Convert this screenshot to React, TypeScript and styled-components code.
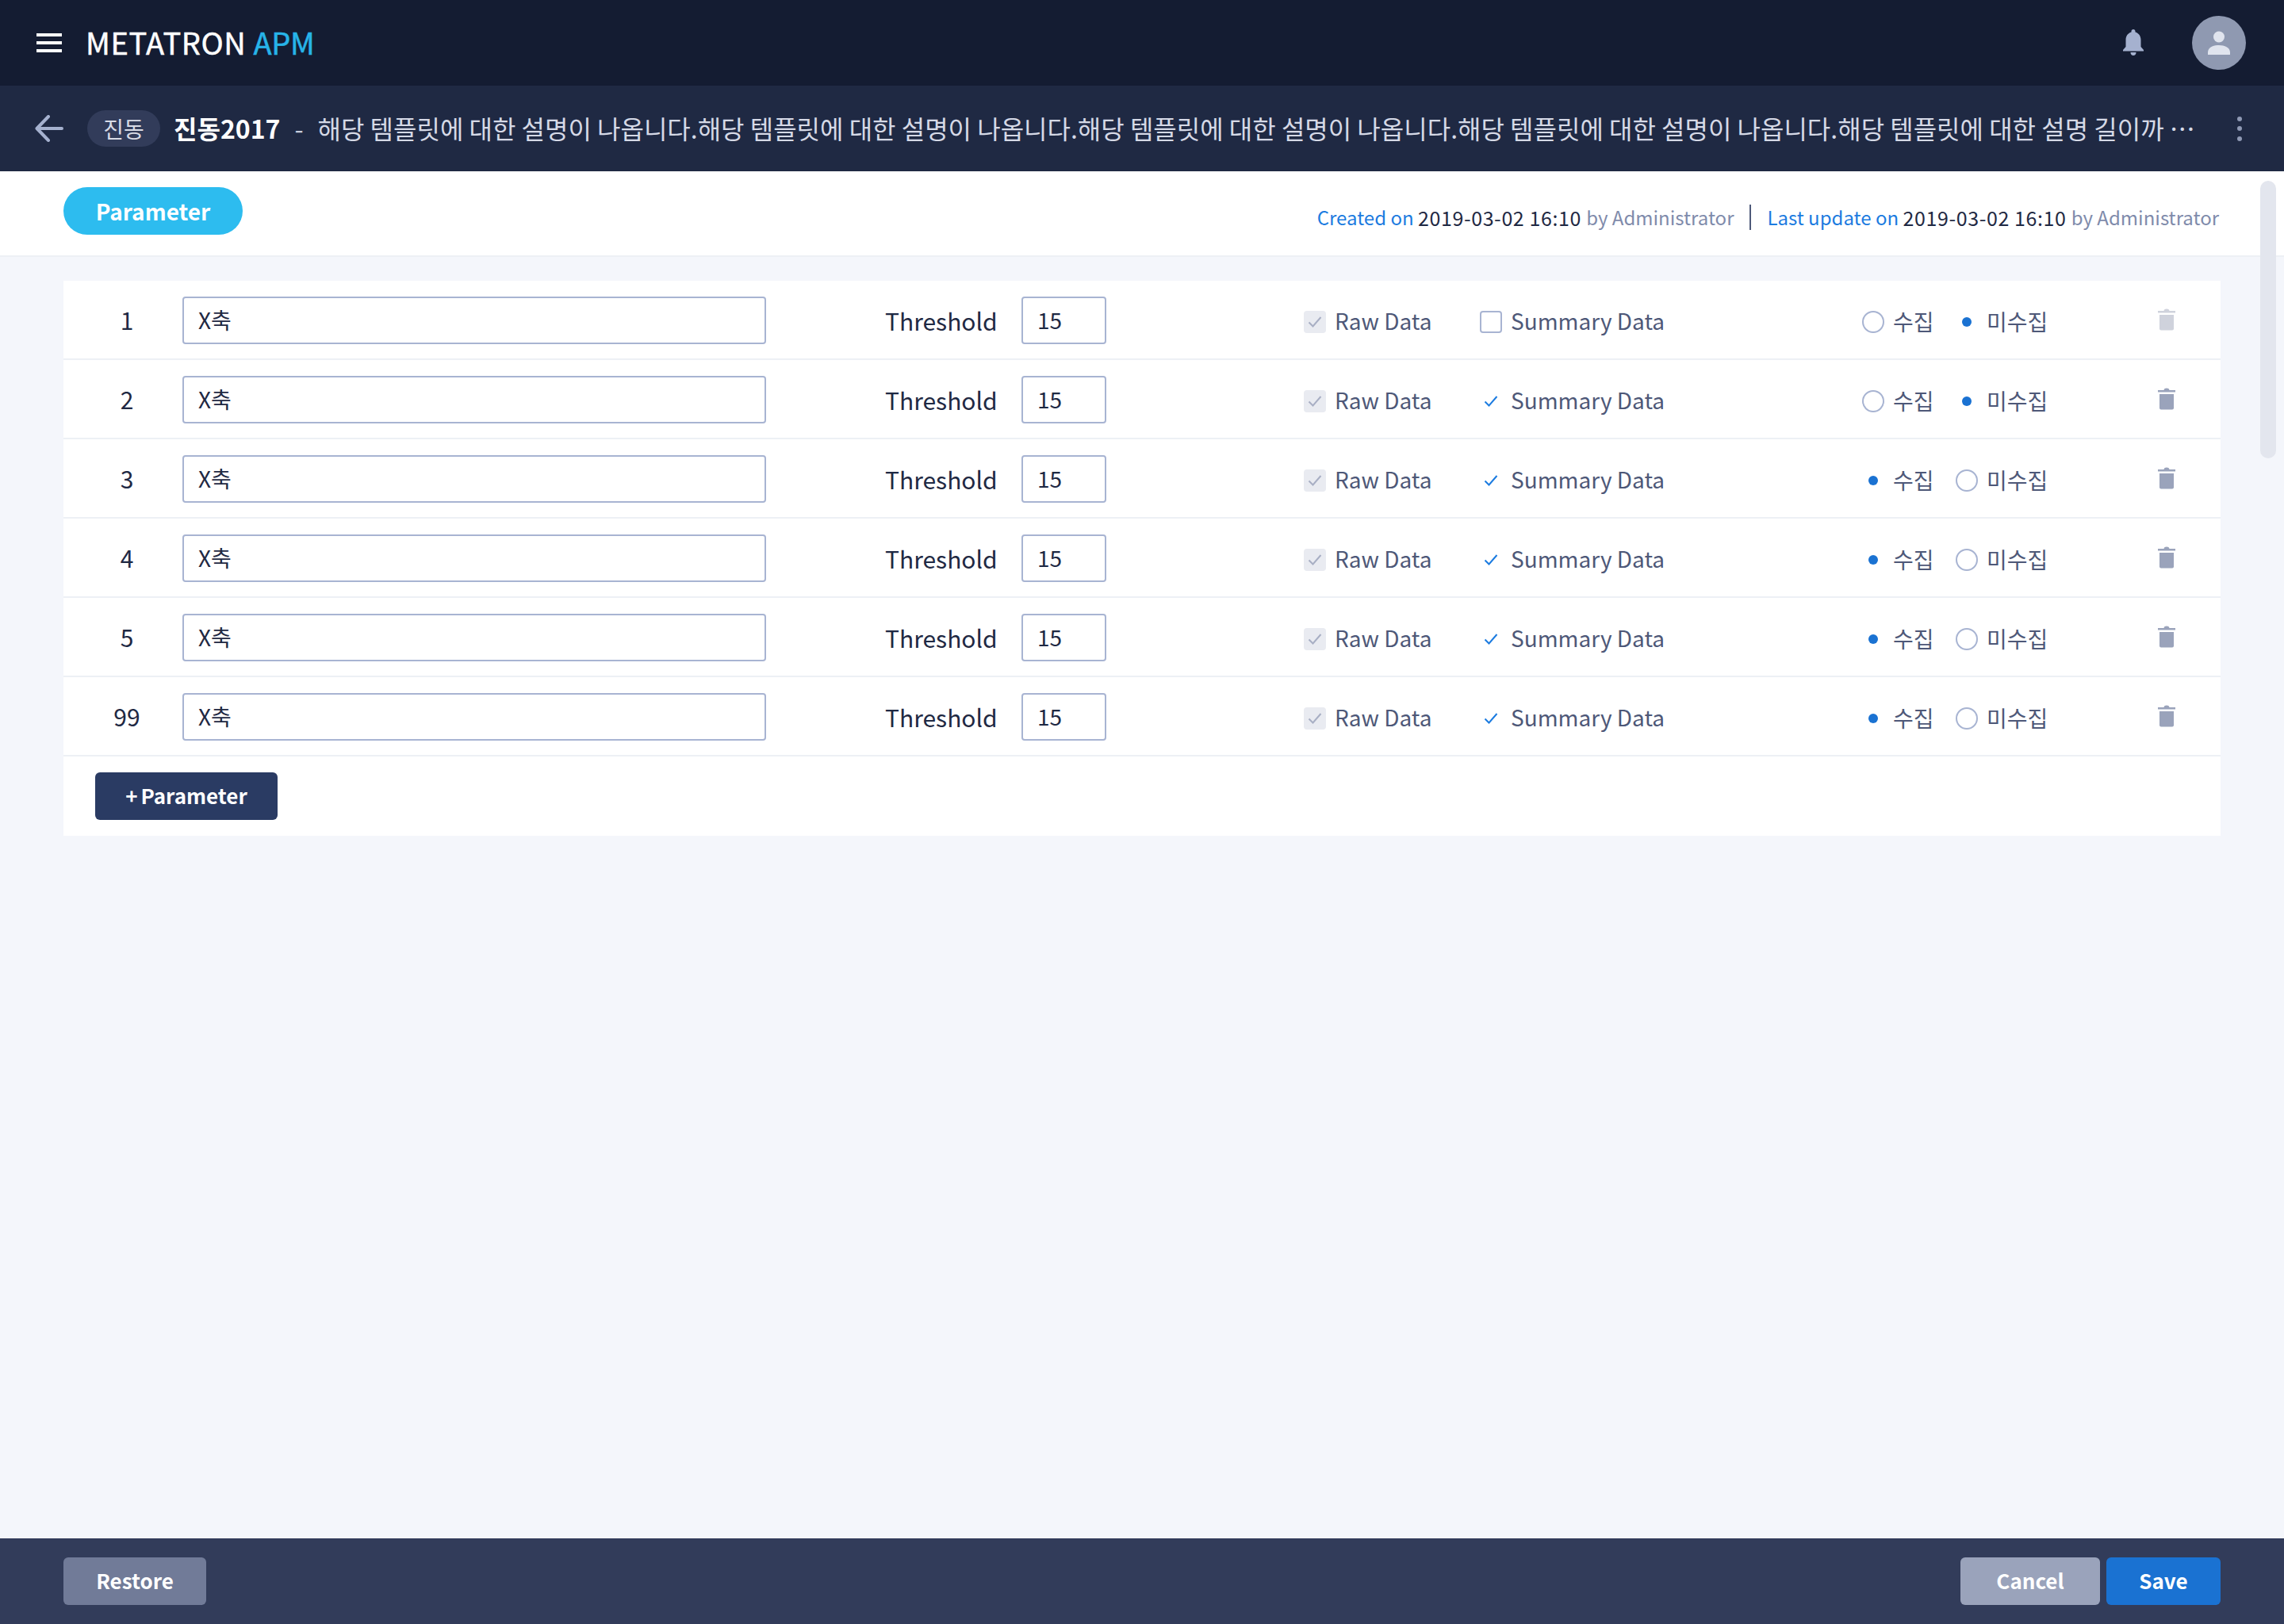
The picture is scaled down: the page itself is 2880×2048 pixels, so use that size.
import React from 'react';
import styled, { createGlobalStyle } from 'styled-components';

const GlobalStyle = createGlobalStyle`
  html, body {
    margin: 0;
    padding: 0;
    background: #f4f6fb;
    font-family: "Noto Sans CJK KR", "Noto Sans", sans-serif;
  }
  * { box-sizing: border-box; }
`;

const Page = styled.div`
  position: relative;
  width: 2880px;
  height: 2048px;
  display: flex;
  flex-direction: column;
  background: #f4f6fb;
  overflow: hidden;
`;

const TopBar = styled.header`
  height: 108px;
  flex: none;
  display: flex;
  align-items: center;
  padding: 0 48px 0 46px;
  background: #141c32;
`;

const MenuButton = styled.div`
  width: 32px;
  height: 24px;
  display: flex;
  flex-direction: column;
  justify-content: space-between;
  margin-right: 30px;
  span {
    display: block;
    height: 4px;
    background: #fff;
  }
`;

const Logo = styled.div`
  font-size: 38px;
  letter-spacing: 0.6px;
  color: #fff;
  line-height: 1;
  padding-bottom: 2px;
  -webkit-text-stroke: 0.5px currentColor;
  span {
    color: #27b4e8;
    letter-spacing: -0.4px;
  }
`;

const TopRight = styled.div`
  margin-left: auto;
  display: flex;
  align-items: center;
  gap: 60px;
`;

const Avatar = styled.div`
  width: 68px;
  height: 68px;
  border-radius: 50%;
  background: #8f99b1;
  display: flex;
  align-items: center;
  justify-content: center;
`;

const SubBar = styled.div`
  height: 108px;
  flex: none;
  display: flex;
  align-items: center;
  padding: 0 0 0 44px;
  background: #1f2943;
`;

const BackIcon = styled.svg`
  flex: none;
  margin-right: 30px;
`;

const TypeBadge = styled.div`
  flex: none;
  width: 92px;
  height: 46px;
  border-radius: 23px;
  background: #323c5a;
  color: #d8dbe6;
  font-size: 28px;
  display: flex;
  align-items: center;
  justify-content: center;
  margin-right: 17px;
`;

const Title = styled.div`
  flex: none;
  font-size: 32px;
  font-weight: 700;
  color: #fff;
  padding-bottom: 2px;
`;

const Dash = styled.div`
  flex: none;
  margin: 0 18px;
  font-size: 32px;
  color: #c9cede;
  padding-bottom: 2px;
`;

const Description = styled.div`
  width: 2374px;
  flex: none;
  font-size: 32px;
  color: #d5d9e6;
  white-space: nowrap;
  overflow: hidden;
  text-overflow: ellipsis;
  padding-bottom: 2px;
`;

const Kebab = styled.div`
  margin-left: 46px;
  display: flex;
  flex-direction: column;
  gap: 6.5px;
  span {
    width: 6px;
    height: 6px;
    border-radius: 50%;
    background: #8f99b4;
  }
`;

const InfoBar = styled.div`
  height: 108px;
  flex: none;
  display: flex;
  align-items: flex-start;
  justify-content: space-between;
  padding: 20px 82px 0 80px;
  background: #fff;
  border-bottom: 2px solid #edf0f5;
`;

const TabPill = styled.div`
  width: 226px;
  height: 60px;
  border-radius: 30px;
  background: #2dbcef;
  color: #fff;
  font-size: 28px;
  font-weight: 700;
  display: flex;
  align-items: center;
  justify-content: center;
`;

const Meta = styled.div`
  margin-top: 20px;
  display: flex;
  align-items: center;
  font-size: 24px;
  line-height: 36px;
  white-space: pre;
`;

const MetaAccent = styled.span`
  color: #1b7be0;
`;

const MetaDate = styled.span`
  color: #1f2943;
  font-size: 25px;
  letter-spacing: 0.6px;
`;

const MetaMuted = styled.span`
  color: #7f8bab;
`;

const MetaDivider = styled.span`
  width: 2px;
  height: 32px;
  margin: 0 20px;
  background: #4e5a7a;
`;

const Content = styled.main`
  flex: 1;
  padding: 30px 80px 0;
`;

const Card = styled.section`
  background: #fff;
  height: 700px;
`;

const Row = styled.div`
  height: 100px;
  display: grid;
  grid-template-columns: 110px 886px 172px 356px 222px 482px 118px 255px 40px;
  align-items: center;
  padding: 2px 0 0 40px;
  border-bottom: 2px solid #edf0f5;
`;

const RowNumber = styled.div`
  width: 80px;
  text-align: center;
  font-size: 30px;
  color: #1f2943;
  padding-bottom: 2px;
`;

const TextField = styled.input<{ $narrow?: boolean }>`
  height: 60px;
  border: 2px solid #a8b4d2;
  border-radius: 4px;
  background: #fff;
  padding: 0 18px 2px;
  font-family: inherit;
  font-size: 28px;
  color: #1f2943;
  outline: none;
  width: ${(p) => (p.$narrow ? '107px' : '736px')};
`;

const ThresholdLabel = styled.div`
  font-size: 30px;
  color: #1f2943;
  padding-bottom: 1px;
`;

const CheckLabel = styled.label`
  display: flex;
  align-items: center;
  gap: 11px;
  font-size: 28px;
  color: #4e5878;
`;

const CheckBox = styled.span<{ $state: 'disabled' | 'empty' | 'checked' }>`
  width: 28px;
  height: 28px;
  flex: none;
  margin-top: 4px;
  border-radius: 4px;
  display: flex;
  align-items: center;
  justify-content: center;
  background: ${(p) => (p.$state === 'disabled' ? '#e9ebf1' : '#fff')};
  border: ${(p) => (p.$state === 'empty' ? '2px solid #a8b4d2' : 'none')};
`;

const RadioLabel = styled.label`
  display: flex;
  align-items: center;
  gap: 11px;
  font-size: 28px;
  color: #4e5878;
  padding-top: 2px;
`;

const RadioMark = styled.span<{ $on: boolean }>`
  width: 28px;
  height: 28px;
  flex: none;
  margin-top: 2px;
  border-radius: 50%;
  border: ${(p) => (p.$on ? 'none' : '2px solid #a8b4d2')};
  display: flex;
  align-items: center;
  justify-content: center;
  &::after {
    content: '';
    display: ${(p) => (p.$on ? 'block' : 'none')};
    width: 12px;
    height: 12px;
    border-radius: 50%;
    background: #1a72d2;
  }
`;

const TrashIcon = styled.svg`
  display: block;
  margin-bottom: 2px;
`;

const AddRow = styled.div`
  padding: 20px 40px;
`;

const DarkButton = styled.button`
  width: 230px;
  height: 60px;
  border: none;
  border-radius: 6px;
  background: #2a3b63;
  color: #fff;
  font-family: inherit;
  font-size: 26px;
  font-weight: 700;
  word-spacing: -2px;
  padding: 0 0 4px;
`;

const BottomBar = styled.footer`
  height: 108px;
  flex: none;
  display: flex;
  align-items: center;
  justify-content: space-between;
  padding: 0 80px;
  background: #323c5a;
`;

const ButtonGroup = styled.div`
  display: flex;
  gap: 8px;
`;

const FootButton = styled.button<{ $w: number; $bg: string }>`
  width: ${(p) => p.$w}px;
  height: 60px;
  border: none;
  border-radius: 6px;
  background: ${(p) => p.$bg};
  color: #fff;
  font-family: inherit;
  font-size: 26px;
  font-weight: 700;
  padding: 0 0 4px;
`;

const Scrollbar = styled.div`
  position: absolute;
  left: 2850px;
  top: 228px;
  width: 20px;
  height: 350px;
  border-radius: 10px;
  background: #e3e6ee;
`;

const Tick = ({ color }: { color: string }) => (
  <svg width="18" height="16" viewBox="0 0 18 16" fill="none">
    <path d="M1.5 8.5 L6.5 13.5 L16.5 2" stroke={color} strokeWidth="2" />
  </svg>
);

const Trash = ({ color }: { color: string }) => (
  <TrashIcon width="22" height="28" viewBox="0 0 22 28">
    <path d="M0 3h7.5C8 1.200 9 .5 11 .5s3 .7 3.500 2.500H22v2.500H0z" fill={color} />
    <path d="M2 8h18v17.500a2 2 0 0 1-2 2H4a2 2 0 0 1-2-2z" fill={color} />
  </TrashIcon>
);

const rows = [
  { no: 1, summary: false, collect: false, locked: true },
  { no: 2, summary: true, collect: false, locked: false },
  { no: 3, summary: true, collect: true, locked: false },
  { no: 4, summary: true, collect: true, locked: false },
  { no: 5, summary: true, collect: true, locked: false },
  { no: 99, summary: true, collect: true, locked: false },
];

const sentence = '해당 템플릿에 대한 설명이 나옵니다.';
const description = sentence.repeat(4) + '해당 템플릿에 대한 설명 길이까 지나치게 길어지면 말줄임으로 표시됩니다.';

export default function App() {
  return (
    <Page>
      <GlobalStyle />
      <TopBar>
        <MenuButton>
          <span />
          <span />
          <span />
        </MenuButton>
        <Logo>
          METATRON <span>APM</span>
        </Logo>
        <TopRight>
          <svg width="28" height="34" viewBox="0 0 28 34">
            <path
              d="M14 0c1.500 0 2.500 1 2.500 2.600v1C21 5 23.500 8.500 23.500 13.500V22l3.500 4v1.500H1V26l3.500-4v-8.500C4.500 8.500 7 5 11.500 3.600v-1C11.500 1 12.500 0 14 0z"
              fill="#a5b1cf"
            />
            <path d="M10.500 29h7c0 2.500-1.500 4-3.500 4s-3.500-1.500-3.500-4z" fill="#a5b1cf" />
          </svg>
          <Avatar>
            <svg width="28" height="30" viewBox="0 0 28 30">
              <circle cx="14" cy="7.500" r="7" fill="#e0e4ee" />
              <path d="M0 30v-3c0-6 7-9 14-9s14 3 14 9v3z" fill="#e0e4ee" />
            </svg>
          </Avatar>
        </TopRight>
      </TopBar>

      <SubBar>
        <BackIcon width="36" height="34" viewBox="0 0 36 34" fill="none">
          <path
            d="M34 17H3M17 2 2.500 17 17 32"
            stroke="#a5b1cf"
            strokeWidth="4"
            strokeLinecap="round"
            strokeLinejoin="round"
          />
        </BackIcon>
        <TypeBadge>진동</TypeBadge>
        <Title>진동2017</Title>
        <Dash>-</Dash>
        <Description>{description}</Description>
        <Kebab>
          <span />
          <span />
          <span />
        </Kebab>
      </SubBar>

      <InfoBar>
        <TabPill>Parameter</TabPill>
        <Meta>
          <MetaAccent>Created on </MetaAccent>
          <MetaDate>2019-03-02 16:10 </MetaDate>
          <MetaMuted>by Administrator</MetaMuted>
          <MetaDivider />
          <MetaAccent>Last update on </MetaAccent>
          <MetaDate>2019-03-02 16:10 </MetaDate>
          <MetaMuted>by Administrator</MetaMuted>
        </Meta>
      </InfoBar>

      <Content>
        <Card>
          {rows.map((r) => (
            <Row key={r.no}>
              <RowNumber>{r.no}</RowNumber>
              <TextField defaultValue="X축" readOnly />
              <ThresholdLabel>Threshold</ThresholdLabel>
              <TextField defaultValue="15" $narrow readOnly />
              <CheckLabel>
                <CheckBox $state="disabled">
                  <Tick color="#a8afc4" />
                </CheckBox>
                Raw Data
              </CheckLabel>
              <CheckLabel>
                <CheckBox $state={r.summary ? 'checked' : 'empty'}>
                  {r.summary && <Tick color="#1b7be0" />}
                </CheckBox>
                Summary Data
              </CheckLabel>
              <RadioLabel>
                <RadioMark $on={r.collect} />
                수집
              </RadioLabel>
              <RadioLabel>
                <RadioMark $on={!r.collect} />
                미수집
              </RadioLabel>
              <Trash color={r.locked ? '#cfd2dc' : '#9aa3bb'} />
            </Row>
          ))}
          <AddRow>
            <DarkButton>+ Parameter</DarkButton>
          </AddRow>
        </Card>
      </Content>

      <BottomBar>
        <FootButton $w={180} $bg="#717b98">Restore</FootButton>
        <ButtonGroup>
          <FootButton $w={176} $bg="#9aa3bb">Cancel</FootButton>
          <FootButton $w={144} $bg="#1a72d2">Save</FootButton>
        </ButtonGroup>
      </BottomBar>

      <Scrollbar />
    </Page>
  );
}
